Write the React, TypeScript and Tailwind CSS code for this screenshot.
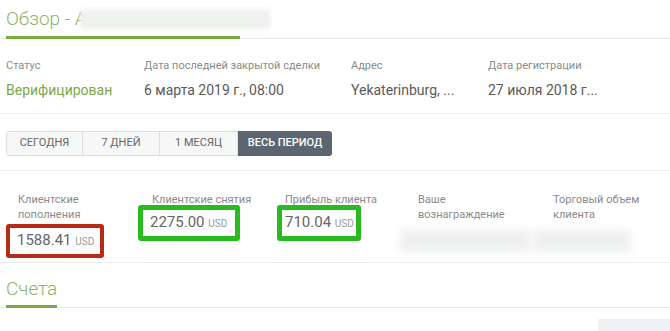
import React from "react";

const font = { fontFamily: "Roboto, 'Noto Sans', sans-serif" };

function InfoCol({ w, label, value, green }: { w: string; label: string; value: string; green?: boolean }) {
  return (
    <div className={`${w} flex flex-col`}>
      <div className="text-[11px] leading-[16px] text-[#8a8a8a]">{label}</div>
      <div className={`mt-[6px] text-[14px] leading-[20px] whitespace-nowrap ${green ? "text-[#79a948]" : "text-[#5a5a5a]"}`}>{value}</div>
    </div>
  );
}

function Value({ n }: { n: string }) {
  return (
    <span className="text-[15px] leading-[26px] text-[#666] whitespace-nowrap">
      {n} <span className="text-[10px] text-[#999]">USD</span>
    </span>
  );
}

export default function App() {
  return (
    <div className="w-[670px] h-[331px] bg-white overflow-hidden" style={font}>
      {/* Header */}
      <div className="border-b border-[#e8eaea] px-[6px]">
        <div className="w-[234px] h-[39px] pt-[5px] pb-[3px] border-b-[3px] border-[#79ab3f] -mb-px flex items-start">
          <div className="flex items-center whitespace-nowrap text-[19px] leading-[28px] font-light text-[#8db466]">
            <span>Обзор - А</span>
            <div className="ml-[-7px] w-[190px] h-[20px] bg-[#eef1ee] blur-[2px] shrink-0" />
          </div>
        </div>
      </div>

      {/* Info row */}
      <div className="h-[75px] border-b border-[#eceeee] pl-[6px] pt-[19px] flex">
        <InfoCol w="w-[138px]" label="Статус" value="Верифицирован" green />
        <InfoCol w="w-[207px]" label="Дата последней закрытой сделки" value="6 марта 2019 г., 08:00" />
        <InfoCol w="w-[137px]" label="Адрес" value="Yekaterinburg, ..." />
        <InfoCol w="w-[150px]" label="Дата регистрации" value="27 июля 2018 г..." />
      </div>

      {/* Period buttons */}
      <div className="h-[57px] border-b border-[#eceeee] pl-[6px] pt-[17px]">
        <div className="flex w-[326px] h-[25px] text-[11px] uppercase text-[#666]">
          <div className="w-[77px] flex items-center justify-center bg-[#f6f7f7] border border-[#dcdfe0] rounded-l-[3px]">Сегодня</div>
          <div className="w-[77px] flex items-center justify-center bg-[#f6f7f7] border-y border-r border-[#dcdfe0]">7 дней</div>
          <div className="w-[78px] flex items-center justify-center bg-[#f6f7f7] border-y border-r border-[#dcdfe0]">1 месяц</div>
          <div className="w-[94px] flex items-center justify-center bg-[#5d6670] text-white font-medium rounded-r-[3px]">Весь период</div>
        </div>
      </div>

      {/* Stats */}
      <div className="h-[92px] border-b border-[#eceeee] pl-[18px] pt-[21px] flex">
        <div className="w-[134px] flex flex-col">
          <div className="text-[11px] leading-[15px] text-[#8a8a8a]">Клиентские<br />пополнения</div>
          <div className="mt-[2px] ml-[-12px] w-[98px] h-[34px] border-[4px] border-[#b72a13] rounded-[3px] pl-[7px] flex items-center">
            <Value n="1588.41" />
          </div>
        </div>
        <div className="w-[133px] flex flex-col">
          <div className="text-[11px] leading-[15px] text-[#8a8a8a] whitespace-nowrap">Клиентские снятия</div>
          <div className="mt-[-2px] ml-[-14px] w-[102px] h-[36px] border-[5px] border-[#27bb1f] rounded-[3px] pl-[7px] flex items-center">
            <Value n="2275.00" />
          </div>
        </div>
        <div className="w-[133px] flex flex-col">
          <div className="text-[11px] leading-[15px] text-[#8a8a8a] whitespace-nowrap">Прибыль клиента</div>
          <div className="mt-[-2px] ml-[-8px] w-[84px] h-[36px] border-[5px] border-[#27bb1f] rounded-[3px] pl-[3px] flex items-center">
            <Value n="710.04" />
          </div>
        </div>
        <div className="w-[135px] flex flex-col">
          <div className="text-[11px] leading-[15px] text-[#8a8a8a]">Ваше<br />вознаграждение</div>
          <div className="mt-[8px] ml-[-18px] w-[130px] h-[22px] bg-[#eeefef] blur-[4px]" />
        </div>
        <div className="w-[117px] flex flex-col">
          <div className="text-[11px] leading-[15px] text-[#8a8a8a]">Торговый объем<br />клиента</div>
          <div className="mt-[8px] ml-[-20px] w-[98px] h-[22px] bg-[#eeefef] blur-[4px]" />
        </div>
      </div>

      {/* Accounts */}
      <div className="border-b border-[#e8eaea] px-[6px]">
        <div className="inline-block pt-[12px] pb-[2px] border-b-[3px] border-[#79ab3f] -mb-px text-[19px] leading-[28px] font-light text-[#8db466]">
          Счета
        </div>
      </div>

      <div className="flex justify-end mt-[11px]">
        <div className="w-[72px] h-[12px] bg-[#eef0f2]" />
      </div>
    </div>
  );
}
